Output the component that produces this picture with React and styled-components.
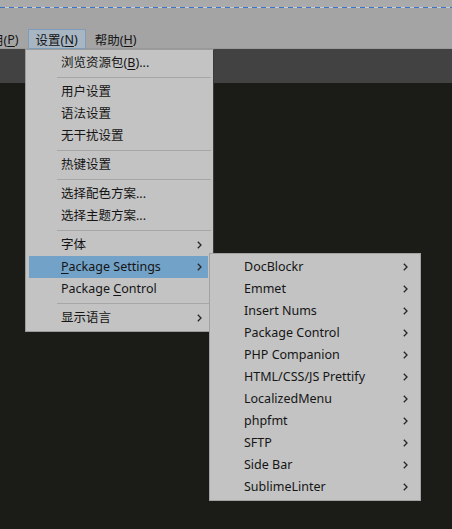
import React from 'react'
import styled, { createGlobalStyle } from 'styled-components'

const GlobalStyle = createGlobalStyle`
  html, body { margin: 0; padding: 0; }
  body {
    width: 452px;
    height: 529px;
    overflow: hidden;
    background: #1b1b17;
    font-family: "Noto Sans", "Noto Sans CJK SC", sans-serif;
  }
`

const mainItems = [
  { label: '浏览资源包', key: 'B', tail: '...' },
  'sep',
  { label: '用户设置' },
  { label: '语法设置' },
  { label: '无干扰设置' },
  'sep',
  { label: '热键设置' },
  'sep',
  { label: '选择配色方案...' },
  { label: '选择主题方案...' },
  'sep',
  { label: '字体', sub: true },
  { pre: '', key: 'P', label: 'ackage Settings', sub: true, active: true, keyFirst: true },
  { pre: 'Package ', key: 'C', label: 'ontrol', keyFirst: true },
  'sep',
  { label: '显示语言', sub: true },
]

const packages = [
  'DocBlockr',
  'Emmet',
  'Insert Nums',
  'Package Control',
  'PHP Companion',
  'HTML/CSS/JS Prettify',
  'LocalizedMenu',
  'phpfmt',
  'SFTP',
  'Side Bar',
  'SublimeLinter',
]

const Chevron = () => (
  <svg width="5" height="8" viewBox="0 0 5 8">
    <path d="M0.8 0.8 L4 4 L0.8 7.2" fill="none" stroke="#262626" strokeWidth="1.3" />
  </svg>
)

const App = () => {
  return (
    <Window>
      <GlobalStyle />
      <TitleStrip />
      <DashLine />
      <MenuBar>
        <BarItem $cut>用(<u>P</u>)</BarItem>
        <BarItem $open>设置(<u>N</u>)</BarItem>
        <BarItem>帮助(<u>H</u>)</BarItem>
      </MenuBar>
      <TabStrip />
      <Editor />

      <Dropdown>
        {mainItems.map((it, i) =>
          it === 'sep' ? (
            <Separator key={i} />
          ) : (
            <Item key={i} $active={it.active}>
              <Label>
                {it.keyFirst ? (
                  <>
                    {it.pre}
                    <u>{it.key}</u>
                    {it.label}
                  </>
                ) : (
                  <>
                    {it.label}
                    {it.key && (
                      <>
                        (<u>{it.key}</u>)
                      </>
                    )}
                    {it.tail}
                  </>
                )}
              </Label>
              {it.sub && <Chevron />}
            </Item>
          )
        )}
      </Dropdown>

      <SubMenu>
        {packages.map((p) => (
          <Item key={p} $wide>
            <Label>{p}</Label>
            <Chevron />
          </Item>
        ))}
      </SubMenu>
    </Window>
  )
}

const Window = styled.div`
  position: relative;
  width: 452px;
  height: 529px;
  overflow: hidden;
  display: flex;
  flex-direction: column;
  background: #1b1b17;
`

const TitleStrip = styled.div`
  height: 7px;
  background: #aaaaaa;
  flex: none;
`

const DashLine = styled.div`
  height: 1px;
  background: repeating-linear-gradient(90deg, #3a74c6 0 5px, #c9ccd0 5px 9px);
  flex: none;
`

const MenuBar = styled.div`
  height: 41px;
  box-sizing: border-box;
  padding-top: 21px;
  background: #a4a4a4;
  border-bottom: 1px solid #999999;
  display: flex;
  align-items: flex-start;
  flex: none;
`

const BarItem = styled.div`
  height: 20px;
  box-sizing: border-box;
  display: flex;
  align-items: center;
  flex: none;
  padding: 0 7px;
  margin-left: ${(p) => (p.$cut ? '-17px' : '0')};
  margin-right: ${(p) => (p.$cut ? '1px' : '1px')};
  font-size: 12.5px;
  color: #141414;
  white-space: nowrap;
  border: 1px solid ${(p) => (p.$open ? '#7f9cb8' : 'transparent')};
  background: ${(p) => (p.$open ? '#a8b6c3' : 'transparent')};
  u { text-underline-offset: 2px; }
`

const TabStrip = styled.div`
  height: 34px;
  background: #424242;
  flex: none;
`

const Editor = styled.div`
  flex: 1;
  background: #1b1b17;
`

const Dropdown = styled.div`
  position: absolute;
  left: 25px;
  top: 49px;
  width: 189px;
  box-sizing: border-box;
  padding: 2px 2px 2px 3px;
  background: #c3c3c3;
  border: 1px solid #9b9b9b;
  border-right-color: #3a3a3a;
  display: flex;
  flex-direction: column;
`

const SubMenu = styled.div`
  position: absolute;
  left: 209px;
  top: 253px;
  width: 212px;
  box-sizing: border-box;
  padding: 2px;
  background: #c3c3c3;
  border: 1px solid #a2a2a2;
  display: flex;
  flex-direction: column;
`

const Item = styled.div`
  height: 22px;
  display: flex;
  align-items: center;
  justify-content: space-between;
  padding: 0 ${(p) => (p.$wide ? '10px' : '6px')} 0 32px;
  margin-right: ${(p) => (p.$wide ? '0' : '3px')};
  background: ${(p) => (p.$active ? '#73a2c8' : 'transparent')};
  color: #151515;
  font-size: 12.5px;
  u { text-underline-offset: 2px; }
`

const Label = styled.span`
  white-space: nowrap;
  line-height: 22px;
`

const Separator = styled.div`
  height: 7px;
  margin-left: 28px;
  display: flex;
  align-items: center;
  &::after {
    content: '';
    flex: 1;
    height: 1px;
    background: #a6a6a6;
  }
`

export default App
